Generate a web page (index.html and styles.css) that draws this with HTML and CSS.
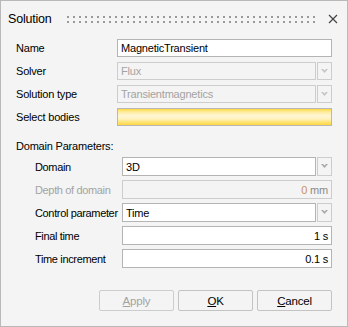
FILE: index.html
```html
<!DOCTYPE html>
<html>
<head>
<meta charset="utf-8">
<link rel="stylesheet" href="styles.css">
</head>
<body>
<div class="dialog">
  <div class="titlebar">
    <span class="title">Solution</span>
    <span class="grip"></span>
    <svg class="close" width="10" height="10" viewBox="0 0 10 10"><path d="M1 1 L9 9 M9 1 L1 9" stroke="#444" stroke-width="1.2" fill="none"/></svg>
  </div>
  <div class="form">
    <div class="row">
      <span class="label">Name</span>
      <div class="field edit"><span class="val">MagneticTransient</span></div>
    </div>
    <div class="row">
      <span class="label">Solver</span>
      <div class="combo disabled">
        <div class="field"><span class="val dim">Flux</span></div>
        <div class="arrow"><svg width="7" height="5" viewBox="0 0 7 5"><path d="M0 0 L2 0 L3.5 1.5 L5 0 L7 0 L3.5 4 Z" fill="#c4c4c4"/></svg></div>
      </div>
    </div>
    <div class="row">
      <span class="label">Solution type</span>
      <div class="combo disabled">
        <div class="field"><span class="val dim">Transientmagnetics</span></div>
        <div class="arrow"><svg width="7" height="5" viewBox="0 0 7 5"><path d="M0 0 L2 0 L3.5 1.5 L5 0 L7 0 L3.5 4 Z" fill="#c4c4c4"/></svg></div>
      </div>
    </div>
    <div class="row">
      <span class="label">Select bodies</span>
      <div class="field yellow"></div>
    </div>

    <div class="section">Domain Parameters:</div>

    <div class="sub">
      <div class="row srow">
        <span class="label">Domain</span>
        <div class="combo">
          <div class="field edit"><span class="val">3D</span></div>
          <div class="arrow"><svg width="7" height="5" viewBox="0 0 7 5"><path d="M0 0 L2 0 L3.5 1.5 L5 0 L7 0 L3.5 4 Z" fill="#a8a8a8"/></svg></div>
        </div>
      </div>
      <div class="row srow">
        <span class="label dim">Depth of domain</span>
        <div class="field num disabledbox"><span class="val"><span class="zero">0</span> <span class="unit">mm</span></span></div>
      </div>
      <div class="row srow">
        <span class="label">Control parameter</span>
        <div class="combo">
          <div class="field edit"><span class="val">Time</span></div>
          <div class="arrow"><svg width="7" height="5" viewBox="0 0 7 5"><path d="M0 0 L2 0 L3.5 1.5 L5 0 L7 0 L3.5 4 Z" fill="#a8a8a8"/></svg></div>
        </div>
      </div>
      <div class="row srow">
        <span class="label">Final time</span>
        <div class="field edit num"><span class="val">1 s</span></div>
      </div>
      <div class="row srow">
        <span class="label">Time increment</span>
        <div class="field edit num"><span class="val">0.1 s</span></div>
      </div>
    </div>
  </div>
  <div class="buttons">
    <button class="btn off"><u>A</u>pply</button>
    <button class="btn"><u>O</u>K</button>
    <button class="btn"><u>C</u>ancel</button>
  </div>
</div>
</body>
</html>
```

FILE: styles.css
```css
html, body {
  margin: 0;
  padding: 0;
}
body {
  width: 348px;
  height: 327px;
  background: #f4f4f4;
  font-family: "Liberation Sans", Arial, sans-serif;
  font-size: 11px;
  letter-spacing: -0.2px;
  color: #000;
}
.dialog {
  box-sizing: border-box;
  width: 348px;
  height: 327px;
  border: 1px solid #b9b9b9;
  display: flex;
  flex-direction: column;
}
.titlebar {
  display: flex;
  align-items: center;
  height: 36px;
  padding: 0 9px 0 7px;
  box-sizing: border-box;
}
.title {
  font-size: 12.5px;
  width: 59px;
}
.grip {
  flex: 1;
  height: 7px;
  margin-right: 10px;
  background-image: radial-gradient(circle at 1px 1px, #9a9a9a 1px, transparent 1.2px);
  background-size: 6px 5px;
  background-repeat: repeat;
  margin-top: 1px;
}
.close {
  display: block;
}
.form {
  display: flex;
  flex-direction: column;
  padding: 2px 15px 0 15px;
}
.row {
  display: flex;
  align-items: center;
  height: 18px;
  margin-bottom: 5px;
}
.label {
  width: 101px;
  flex: none;
  white-space: nowrap;
}
.dim {
  color: #a3a3a3;
}
.field {
  flex: 1;
  box-sizing: border-box;
  height: 100%;
  border: 1px solid #c3c3c3;
  background: #f4f4f4;
  display: flex;
  align-items: center;
  padding: 0 3px;
  overflow: hidden;
  white-space: nowrap;
}
.field.edit {
  background: #fff;
  border-color: #b4b4b4;
}
.disabledbox {
  border-color: #cdcdcd;
}
.num {
  justify-content: flex-end;
}
.zero {
  color: #c8935a;
}
.unit {
  color: #8a8a8a;
}
.combo {
  flex: 1;
  display: flex;
  height: 100%;
  gap: 1px;
}
.combo.disabled .field {
  border-color: #cdcdcd;
}
.arrow {
  width: 15px;
  box-sizing: border-box;
  border: 1px solid #cdcdcd;
  display: flex;
  align-items: center;
  justify-content: center;
  background: #f4f4f4;
}
.arrow svg {
  display: block;
}
.yellow {
  border-color: #b8b8b8;
  background: linear-gradient(#ffd83e 0%, #ffeb9c 18%, #fff6d2 40%, #fff3c4 60%, #ffe57c 80%, #ffd640 100%);
}
.section {
  margin-top: 7px;
  height: 17px;
  line-height: 17px;
  margin-bottom: 2px;
}
.sub {
  display: flex;
  flex-direction: column;
  padding-left: 19px;
}
.srow {
  height: 19px;
  margin-bottom: 4px;
}
.srow .label {
  width: 87px;
  letter-spacing: -0.35px;
}
.buttons {
  display: flex;
  justify-content: flex-end;
  gap: 4px;
  padding: 0 15px 0 0;
  margin-top: 18px;
}
.btn {
  width: 75px;
  height: 21px;
  box-sizing: border-box;
  border: 1px solid #c3c3c3;
  border-radius: 2px;
  background: #f4f4f4;
  font-family: "Liberation Sans", Arial, sans-serif;
  font-size: 11.5px;
  letter-spacing: -0.2px;
  color: #000;
  padding: 0;
}
.btn.off {
  color: #a3a3a3;
  border-color: #cdcdcd;
}
```
